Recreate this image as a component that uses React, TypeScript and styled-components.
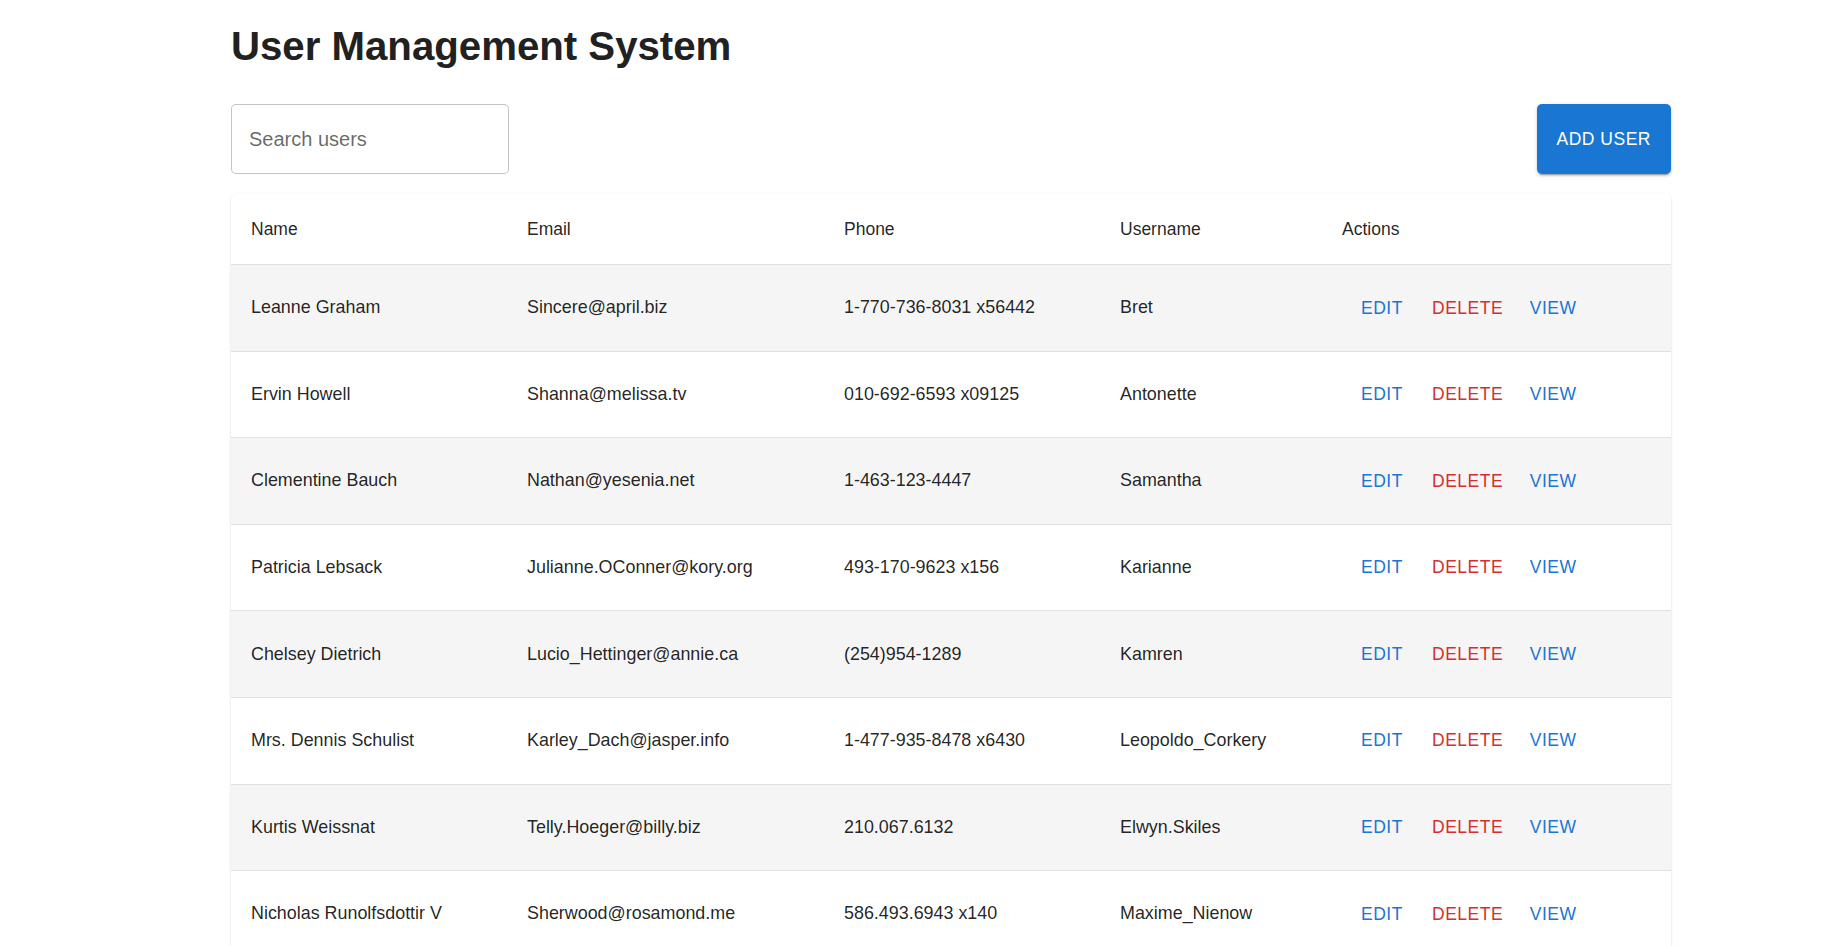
import React from 'react';
import styled, { createGlobalStyle } from 'styled-components';

const GlobalStyle = createGlobalStyle`
  body {
    margin: 0;
    background: #ffffff;
    font-family: "Liberation Sans", Arial, sans-serif;
    color: rgba(0, 0, 0, 0.87);
  }
`;

const Page = styled.main`
  width: 1440px;
  margin-left: 231px;
  padding-top: 23px;
`;

const Title = styled.h1`
  margin: 0 0 33px 0;
  font-size: 40.2px;
  line-height: 48px;
  font-weight: 700;
  color: #212121;
`;

const Toolbar = styled.div`
  display: flex;
  justify-content: space-between;
  align-items: stretch;
  margin-bottom: 20px;
`;

const SearchInput = styled.input`
  box-sizing: border-box;
  width: 278px;
  height: 70px;
  padding: 0 17px;
  border: 1px solid rgba(0, 0, 0, 0.23);
  border-radius: 5px;
  font-family: inherit;
  font-size: 20px;
  color: rgba(0, 0, 0, 0.87);
  outline: none;

  &::placeholder {
    color: rgba(0, 0, 0, 0.6);
    opacity: 1;
  }
`;

const AddButton = styled.button`
  display: inline-flex;
  align-items: center;
  justify-content: center;
  padding: 0 20px;
  border: none;
  border-radius: 5px;
  background: #1976d2;
  color: #ffffff;
  font-family: inherit;
  font-size: 17.5px;
  font-weight: 500;
  letter-spacing: 0.5px;
  text-transform: uppercase;
  box-shadow: 0px 3px 1px -2px rgba(0, 0, 0, 0.2),
    0px 2px 2px 0px rgba(0, 0, 0, 0.14), 0px 1px 5px 0px rgba(0, 0, 0, 0.12);
  cursor: pointer;
`;

const Card = styled.div`
  border-radius: 5px;
  background: #ffffff;
  box-shadow: 0px 2px 1px -1px rgba(0, 0, 0, 0.2),
    0px 1px 1px 0px rgba(0, 0, 0, 0.14), 0px 1px 3px 0px rgba(0, 0, 0, 0.12);
  overflow: hidden;
`;

const Table = styled.table`
  width: 100%;
  border-collapse: collapse;
  table-layout: fixed;
`;

const HeadCell = styled.th<{ $width?: number }>`
  box-sizing: border-box;
  width: ${(p) => (p.$width ? `${p.$width}px` : 'auto')};
  padding: 20px;
  border-bottom: 1px solid #e0e0e0;
  text-align: left;
  font-size: 17.5px;
  font-weight: 500;
  line-height: 30px;
  color: rgba(0, 0, 0, 0.87);
`;

const Row = styled.tr<{ $striped: boolean }>`
  background: ${(p) => (p.$striped ? '#f5f5f5' : '#ffffff')};
`;

const Cell = styled.td`
  padding: 20px;
  border-bottom: 1px solid #e0e0e0;
  font-size: 17.9px;
  line-height: 25px;
  vertical-align: middle;
  color: rgba(0, 0, 0, 0.87);
  white-space: nowrap;
`;

const ActionButton = styled.button<{ $danger?: boolean }>`
  display: inline-flex;
  align-items: center;
  justify-content: center;
  min-width: 80px;
  padding: 7.5px 10px;
  border: none;
  background: transparent;
  color: ${(p) => (p.$danger ? '#d32f2f' : '#1976d2')};
  font-family: inherit;
  font-size: 17.5px;
  font-weight: 500;
  line-height: 30.6px;
  letter-spacing: 0.5px;
  text-transform: uppercase;
  vertical-align: middle;
  cursor: pointer;
`;

interface User {
  name: string;
  email: string;
  phone: string;
  username: string;
}

const users: User[] = [
  { name: 'Leanne Graham', email: 'Sincere@april.biz', phone: '1-770-736-8031 x56442', username: 'Bret' },
  { name: 'Ervin Howell', email: 'Shanna@melissa.tv', phone: '010-692-6593 x09125', username: 'Antonette' },
  { name: 'Clementine Bauch', email: 'Nathan@yesenia.net', phone: '1-463-123-4447', username: 'Samantha' },
  { name: 'Patricia Lebsack', email: 'Julianne.OConner@kory.org', phone: '493-170-9623 x156', username: 'Karianne' },
  { name: 'Chelsey Dietrich', email: 'Lucio_Hettinger@annie.ca', phone: '(254)954-1289', username: 'Kamren' },
  { name: 'Mrs. Dennis Schulist', email: 'Karley_Dach@jasper.info', phone: '1-477-935-8478 x6430', username: 'Leopoldo_Corkery' },
  { name: 'Kurtis Weissnat', email: 'Telly.Hoeger@billy.biz', phone: '210.067.6132', username: 'Elwyn.Skiles' },
  { name: 'Nicholas Runolfsdottir V', email: 'Sherwood@rosamond.me', phone: '586.493.6943 x140', username: 'Maxime_Nienow' },
  { name: 'Glenna Reichert', email: 'Chaim_McDermott@dana.io', phone: '(775)976-6794 x41206', username: 'Delphine' },
  { name: 'Clementina DuBuque', email: 'Rey.Padberg@karina.biz', phone: '024-648-3804', username: 'Moriah.Stanton' },
];

const App: React.FC = () => (
  <>
    <GlobalStyle />
    <Page>
      <Title>User Management System</Title>
      <Toolbar>
        <SearchInput placeholder="Search users" />
        <AddButton>Add User</AddButton>
      </Toolbar>
      <Card>
        <Table>
          <thead>
            <tr>
              <HeadCell $width={276}>Name</HeadCell>
              <HeadCell $width={317}>Email</HeadCell>
              <HeadCell $width={276}>Phone</HeadCell>
              <HeadCell $width={222}>Username</HeadCell>
              <HeadCell>Actions</HeadCell>
            </tr>
          </thead>
          <tbody>
            {users.map((user, i) => (
              <Row key={user.username} $striped={i % 2 === 0}>
                <Cell>{user.name}</Cell>
                <Cell>{user.email}</Cell>
                <Cell>{user.phone}</Cell>
                <Cell>{user.username}</Cell>
                <Cell>
                  <ActionButton>Edit</ActionButton>
                  <ActionButton $danger>Delete</ActionButton>
                  <ActionButton>View</ActionButton>
                </Cell>
              </Row>
            ))}
          </tbody>
        </Table>
      </Card>
    </Page>
  </>
);

export default App;
